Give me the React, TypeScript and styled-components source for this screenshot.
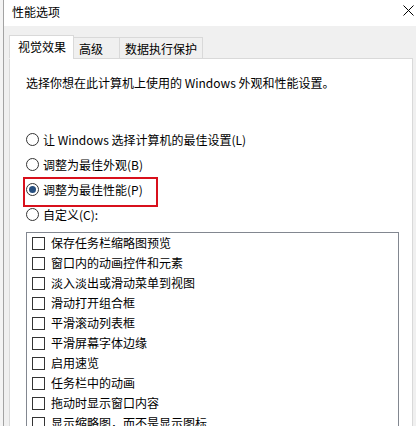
import React from "react";
import styled, { createGlobalStyle } from "styled-components";

const GlobalStyle = createGlobalStyle`
  html, body {
    margin: 0;
    padding: 0;
    background: #f0f0f0;
  }
  body {
    font-family: "Noto Sans CJK SC", "Noto Sans", sans-serif;
    font-size: 12px;
    color: #000;
  }
`;

const tabs = [
  { label: "视觉效果", width: 64 },
  { label: "高级", width: 46 },
  { label: "数据执行保护", width: 83 },
];

const radios = [
  "让 Windows 选择计算机的最佳设置(L)",
  "调整为最佳外观(B)",
  "调整为最佳性能(P)",
  "自定义(C):",
];

const options = [
  "保存任务栏缩略图预览",
  "窗口内的动画控件和元素",
  "淡入淡出或滑动菜单到视图",
  "滑动打开组合框",
  "平滑滚动列表框",
  "平滑屏幕字体边缘",
  "启用速览",
  "任务栏中的动画",
  "拖动时显示窗口内容",
  "显示缩略图，而不是显示图标",
];

export default function App() {
  return (
    <>
      <GlobalStyle />
      <Screen>
        <Behind />
        <Window>
          <TitleBar>
            <Title>性能选项</Title>
            <CloseButton>
              <svg width="11" height="11" viewBox="0 0 11 11">
                <path d="M0.5 0.5 L10.5 10.5 M10.5 0.5 L0.5 10.5" stroke="#000" strokeWidth="1" />
              </svg>
            </CloseButton>
          </TitleBar>
          <Body>
            <TabRow>
              {tabs.map((t, i) => (
                <Tab key={t.label} $active={i === 0} $width={t.width}>
                  {t.label}
                </Tab>
              ))}
            </TabRow>
            <Panel>
              <Description>选择你想在此计算机上使用的 Windows 外观和性能设置。</Description>
              <RadioGroup>
                {radios.map((r, i) => (
                  <RadioRow key={r}>
                    {i === 2 && <Highlight />}
                    <RadioCircle $checked={i === 2} />
                    <span>{r}</span>
                  </RadioRow>
                ))}
              </RadioGroup>
              <ListBox>
                {options.map((o) => (
                  <ListItem key={o}>
                    <CheckBox />
                    <span>{o}</span>
                  </ListItem>
                ))}
              </ListBox>
            </Panel>
          </Body>
        </Window>
      </Screen>
    </>
  );
}

const Screen = styled.div`
  display: flex;
  width: 416px;
  height: 426px;
  overflow: hidden;
`;

const Behind = styled.div`
  width: 3px;
  flex-shrink: 0;
  background: #f4f4f4;
`;

const Window = styled.div`
  flex: 1;
  display: flex;
  flex-direction: column;
  border-left: 1px solid #a3a3a3;
  background: #f0f0f0;
  min-width: 0;
`;

const TitleBar = styled.div`
  height: 26px;
  flex-shrink: 0;
  display: flex;
  align-items: center;
  justify-content: space-between;
  background: #fff;
  padding: 0 2px 3px 8px;
  box-sizing: border-box;
`;

const Title = styled.span`
  font-size: 12px;
  line-height: 16px;
`;

const CloseButton = styled.div`
  width: 12px;
  display: flex;
  align-items: center;
  justify-content: center;
  margin-top: -2px;
`;

const Body = styled.div`
  flex: 1;
  display: flex;
  flex-direction: column;
  padding: 9px 3px 0 5px;
`;

const TabRow = styled.div`
  display: flex;
  align-items: flex-end;
  height: 24px;
  position: relative;
  z-index: 1;
  margin-bottom: -1px;
`;

const Tab = styled.div<{ $active?: boolean; $width: number }>`
  display: flex;
  align-items: center;
  width: ${(p) => p.$width + 1}px;
  height: ${(p) => (p.$active ? "24px" : "22px")};
  padding: ${(p) => (p.$active ? "0 0 2px 8px" : "0 0 0 5px")};
  margin-left: -1px;
  background: ${(p) => (p.$active ? "#fff" : "#f0f0f0")};
  border: 1px solid #d9d9d9;
  border-bottom: ${(p) => (p.$active ? "1px solid #fff" : "1px solid #d9d9d9")};
  box-sizing: border-box;
  white-space: nowrap;

  &:first-child {
    margin-left: 0;
  }
`;

const Panel = styled.div`
  flex: 1;
  background: #fff;
  border: 1px solid #d9d9d9;
  border-bottom: none;
  padding: 16px 0 0 16px;
  display: flex;
  flex-direction: column;
`;

const Description = styled.div`
  line-height: 16px;
`;

const RadioGroup = styled.div`
  display: flex;
  flex-direction: column;
  margin-top: 36px;
`;

const RadioRow = styled.div`
  position: relative;
  display: flex;
  align-items: center;
  gap: 4px;
  height: 25px;
  line-height: 16px;
`;

const Highlight = styled.div`
  position: absolute;
  left: -3px;
  top: 0;
  width: 135px;
  height: 30px;
  border: 2.5px solid #d8101c;
  box-sizing: border-box;
  pointer-events: none;
`;

const RadioCircle = styled.span<{ $checked?: boolean }>`
  width: 13px;
  height: 13px;
  border-radius: 50%;
  border: 1px solid #333;
  box-sizing: border-box;
  background: #fff;
  display: flex;
  align-items: center;
  justify-content: center;
  flex-shrink: 0;

  &::after {
    content: "";
    display: ${(p) => (p.$checked ? "block" : "none")};
    width: 7px;
    height: 7px;
    border-radius: 50%;
    background: #264f7f;
  }
`;

const ListBox = styled.div`
  margin-top: 5px;
  width: 373px;
  flex: 1;
  border: 1px solid #828790;
  border-bottom: none;
  box-sizing: border-box;
  display: flex;
  flex-direction: column;
`;

const ListItem = styled.div`
  display: flex;
  align-items: center;
  gap: 6px;
  height: 20px;
  padding-left: 5px;
  line-height: 16px;
  flex-shrink: 0;
`;

const CheckBox = styled.span`
  width: 13px;
  height: 13px;
  border: 1px solid #333;
  box-sizing: border-box;
  background: #fff;
  flex-shrink: 0;
`;
